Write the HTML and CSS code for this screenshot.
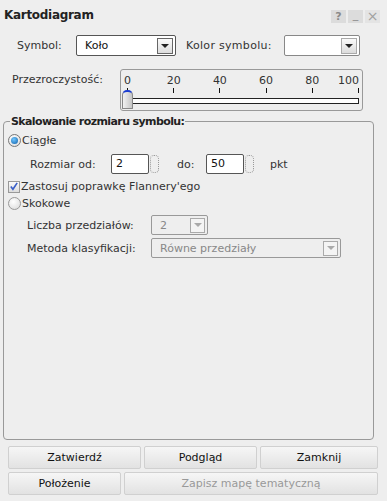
FILE: index.html
```html
<!DOCTYPE html>
<html lang="pl">
<head>
  <meta charset="UTF-8">
  <title>Kartodiagram</title>
  <link rel="stylesheet" href="styles.css">
</head>
<body>
  <div class="window">

    <div class="titlebar">
      <span class="title">Kartodiagram</span>
      <div class="tools">
        <span class="tool">?</span>
        <span class="tool tool-min">_</span>
        <span class="tool tool-close">&times;</span>
      </div>
    </div>

    <div class="row row-symbol">
      <span class="lbl lbl-symbol">Symbol:</span>
      <div class="combo combo-symbol">
        <span class="combo-text">Koło</span>
        <span class="combo-btn"><span class="arrow"></span></span>
      </div>
      <span class="lbl lbl-color">Kolor symbolu:</span>
      <div class="combo combo-color">
        <span class="combo-text"></span>
        <span class="combo-btn light"><span class="arrow"></span></span>
      </div>
    </div>

    <div class="row row-opacity">
      <span class="lbl lbl-opacity">Przezroczystość:</span>
      <div class="slider">
        <div class="scale">
          <div class="mark"><span>0</span><i></i></div>
          <div class="mark"><span>20</span><i></i></div>
          <div class="mark"><span>40</span><i></i></div>
          <div class="mark"><span>60</span><i></i></div>
          <div class="mark"><span>80</span><i></i></div>
          <div class="mark mark-last"><span>100</span><i></i></div>
        </div>
        <div class="track"></div>
        <div class="thumb"></div>
      </div>
    </div>

    <fieldset class="group">
      <legend>Skalowanie rozmiaru symbolu:</legend>

      <div class="opt">
        <span class="radio checked"></span>Ciągłe
      </div>

      <div class="sizes">
        <span class="lbl">Rozmiar od:</span>
        <span class="spin"><span class="num">2</span><span class="spin-btn"></span></span>
        <span class="lbl lbl-to">do:</span>
        <span class="spin"><span class="num">50</span><span class="spin-btn"></span></span>
        <span class="lbl lbl-pkt">pkt</span>
      </div>

      <div class="opt opt-check">
        <span class="check">
          <svg width="11" height="11" viewBox="0 0 11 11"><path d="M2 5.5 L4.3 8.5 L9 1.5" fill="none" stroke="#3a5fc8" stroke-width="1.8"/></svg>
        </span>Zastosuj poprawkę Flannery'ego
      </div>

      <div class="opt">
        <span class="radio"></span>Skokowe
      </div>

      <div class="field">
        <span class="lbl lbl-field">Liczba przedziałów:</span>
        <div class="combo disabled combo-count">
          <span class="combo-text">2</span>
          <span class="combo-btn light"><span class="arrow"></span></span>
        </div>
      </div>
      <div class="field">
        <span class="lbl lbl-field">Metoda klasyfikacji:</span>
        <div class="combo disabled combo-method">
          <span class="combo-text">Równe przedziały</span>
          <span class="combo-btn light"><span class="arrow"></span></span>
        </div>
      </div>
    </fieldset>

    <div class="buttons">
      <div class="btn-row">
        <button class="btn btn-ok">Zatwierdź</button>
        <button class="btn btn-preview">Podgląd</button>
        <button class="btn btn-close">Zamknij</button>
      </div>
      <div class="btn-row">
        <button class="btn btn-pos">Położenie</button>
        <button class="btn btn-save" disabled>Zapisz mapę tematyczną</button>
      </div>
    </div>

  </div>
</body>
</html>
```

FILE: styles.css
```css
* { box-sizing: border-box; }

body {
  margin: 0;
  background: #eeeeee;
  font-family: 'DejaVu Sans', Verdana, sans-serif;
  font-size: 11px;
  color: #333;
}

.window {
  height: 100vh;
  display: flex;
  flex-direction: column;
}

/* title bar */
.titlebar {
  height: 30px;
  display: flex;
  align-items: center;
  justify-content: space-between;
  padding: 0 7px 0 4px;
}

.title {
  font-weight: bold;
  font-size: 12px;
  letter-spacing: -0.3px;
  color: #222;
  margin-top: -1px;
}

.tools {
  display: flex;
  gap: 2px;
  margin-top: 2px;
}

.tool {
  width: 15px;
  height: 13px;
  background: #dcdcdc;
  color: #8a8a8a;
  font-size: 11px;
  font-weight: bold;
  line-height: 13px;
  text-align: center;
}

.tool-min {
  line-height: 9px;
  font-weight: normal;
}

.tool-close {
  background: #e4e4e4;
  color: #a0a0a0;
  font-weight: normal;
  font-size: 14px;
}

/* rows */
.row {
  display: flex;
  align-items: center;
}

.row-symbol {
  margin-top: 5px;
  height: 21px;
}

.lbl-symbol { margin-left: 17px; width: 59px; }
.lbl-color { margin-left: 10px; width: 98px; letter-spacing: 0.3px; }

.combo {
  height: 21px;
  background: #fff;
  border: 1px solid #555;
  border-radius: 2px;
  display: flex;
  align-items: center;
  justify-content: space-between;
  padding: 0 2px 0 8px;
}

.combo-symbol { width: 100px; color: #111; }
.combo-color { width: 76px; border-color: #888; }

.combo-btn {
  width: 16px;
  height: 16px;
  border: 1px solid #666;
  background: linear-gradient(#fafafa, #dcdcdc);
  display: flex;
  align-items: center;
  justify-content: center;
}

.combo-btn.light { border-color: #aaa; }

.arrow {
  width: 0;
  height: 0;
  border-left: 4px solid transparent;
  border-right: 4px solid transparent;
  border-top: 4px solid #222;
}

.combo.disabled {
  background: #eeeeee;
  border-color: #999;
  color: #888;
  height: 20px;
}

.combo.disabled .combo-btn {
  width: 15px;
  height: 15px;
  background: #f4f4f4;
}

.combo.disabled .arrow { border-top-color: #aaa; }

/* opacity slider */
.row-opacity {
  margin-top: 13px;
  align-items: flex-start;
}

.lbl-opacity {
  margin-left: 12px;
  width: 108px;
  margin-top: 4px;
}

.slider {
  position: relative;
  width: 243px;
  height: 42px;
  border: 1px solid #999;
  border-radius: 3px;
  padding: 5px 4px 0 6px;
}

.scale {
  display: flex;
  justify-content: space-between;
  width: 232px;
}

.mark {
  width: 1px;
  display: flex;
  flex-direction: column;
  align-items: center;
}

.mark span {
  white-space: nowrap;
  line-height: 12px;
  color: #333;
}

.mark-last { align-items: flex-end; }

.mark i {
  display: block;
  width: 1px;
  height: 5px;
  margin-top: 1px;
  background: #111;
}

.track {
  margin-top: 5px;
  width: 232px;
  height: 6px;
  border: 1px solid #222;
  background: #fff;
}

.thumb {
  position: absolute;
  left: 1px;
  top: 20px;
  width: 11px;
  height: 19px;
  border: 1px solid #888;
  border-top: 2px solid #1a3cd0;
  border-radius: 5px 5px 1px 1px;
  background: linear-gradient(90deg, #f2f2f2, #c6c6c6);
}

/* fieldset */
.group {
  flex: 1;
  margin: 4px 13px 0 3px;
  border: 1px solid #999;
  border-radius: 4px;
  padding: 4px 0 0 4px;
}

.group legend {
  font-weight: bold;
  letter-spacing: -0.6px;
  color: #222;
  padding: 0 1px;
  margin-left: 2px;
}

.opt {
  display: flex;
  align-items: center;
  height: 17px;
}

.radio {
  width: 13px;
  height: 13px;
  border-radius: 50%;
  border: 1px solid #999;
  background: radial-gradient(circle at 40% 35%, #fff, #d8d8d8);
  margin-right: 1px;
  display: inline-flex;
  align-items: center;
  justify-content: center;
}

.radio.checked {
  border-color: #777;
}

.radio.checked::after {
  content: '';
  width: 7px;
  height: 7px;
  border-radius: 50%;
  background: radial-gradient(circle at 40% 35%, #6fc6ff, #0d5ea8);
}

.sizes {
  display: flex;
  align-items: center;
  margin-top: 5px;
  height: 20px;
}

.sizes .lbl:first-child { margin-left: 22px; width: 81px; }
.lbl-to { margin-left: 18px; width: 29px; }
.lbl-pkt { margin-left: 16px; }

.spin {
  display: flex;
  align-items: center;
}

.num {
  width: 38px;
  height: 20px;
  background: #fff;
  border: 1px solid #555;
  border-radius: 2px;
  padding: 2px 0 0 4px;
  color: #111;
}

.spin-btn {
  width: 9px;
  height: 18px;
  border: 1px dotted #999;
  border-radius: 4px;
  margin-left: 1px;
}

.opt-check {
  margin-top: 4px;
}

.check {
  width: 12px;
  height: 12px;
  border: 1px solid #999;
  background: linear-gradient(#fafafa, #dcdcdc);
  margin-right: 1px;
  display: inline-flex;
  align-items: center;
  justify-content: center;
}

.field {
  display: flex;
  align-items: center;
  margin-top: 3px;
}

.field:first-of-type { margin-top: 2px; }

.lbl-field { margin-left: 19px; width: 124px; }

.combo-count { width: 57px; }
.combo-method { width: 190px; }

/* buttons */
.buttons {
  padding: 6px 9px 6px 8px;
  display: flex;
  flex-direction: column;
  gap: 3px;
}

.btn-row {
  display: flex;
  gap: 3px;
}

.btn {
  height: 23px;
  font-family: 'DejaVu Sans', Verdana, sans-serif;
  font-size: 11px;
  color: #111;
  border: 1px solid #d0d0d0;
  border-radius: 2px;
  background: linear-gradient(#f6f6f6, #e2e2e2);
  padding: 0;
}

.btn-ok { width: 133px; }
.btn-preview { width: 113px; }
.btn-close { flex: 1; }
.btn-pos { width: 113px; }
.btn-save { flex: 1; color: #999; }
```
